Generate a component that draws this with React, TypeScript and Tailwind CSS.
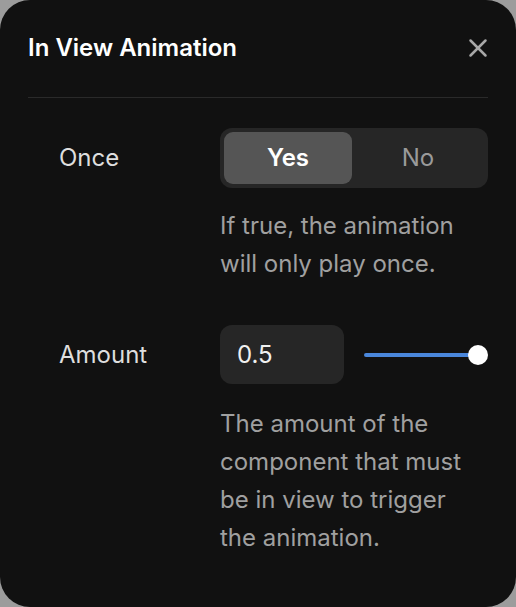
import { X } from "lucide-react"

export default function App() {
  return (
    <div className="w-[516px] h-[607px] bg-[#9c9c9c] font-['Inter',sans-serif]">
      <div className="h-full rounded-[30px] bg-[#111111] px-7 pt-[32px]">
        {/* Header */}
        <div className="flex items-center justify-between">
          <h2 className="text-[24px] leading-8 font-semibold text-white">In View Animation</h2>
          <X size={30} strokeWidth={2} className="text-[#a8a8a8] -mr-[5px] -my-1" />
        </div>
        <div className="mt-[33px] h-px bg-[#2a2a2a]" />

        <div className="pl-[31px] pt-[30px]">
          {/* Once */}
          <div className="grid grid-cols-[161px_1fr]">
            <div className="flex h-[60px] items-center text-[24px] text-[#dedede]">Once</div>
            <div>
              <div className="flex h-[60px] rounded-[12px] bg-[#262626] p-1">
                <button className="w-[128px] rounded-[9px] bg-[#555555] text-[24px] font-semibold text-white">
                  Yes
                </button>
                <button className="flex-1 text-[24px] text-[#9a9a9a]">No</button>
              </div>
              <p className="mt-[19px] text-[24px] leading-[38px] text-[#a0a0a0]">
                If true, the animation
                <br />
                will only play once.
              </p>
            </div>
          </div>

          {/* Amount */}
          <div className="mt-[42px] grid grid-cols-[161px_1fr]">
            <div className="flex h-[59px] items-center text-[24px] text-[#dedede]">Amount</div>
            <div>
              <div className="flex h-[59px] items-center gap-5">
                <div className="flex h-full w-[124px] items-center rounded-[12px] bg-[#262626] pl-[17px] text-[24px] text-[#f0f0f0]">
                  0.5
                </div>
                <div className="relative flex flex-1 items-center">
                  <div className="h-1 w-[114px] rounded-full bg-[#4a87dc]" />
                  <div className="absolute right-0 h-5 w-5 rounded-full bg-white" />
                </div>
              </div>
              <p className="mt-[21px] text-[24px] leading-[38px] text-[#a0a0a0]">
                The amount of the
                <br />
                component that must
                <br />
                be in view to trigger
                <br />
                the animation.
              </p>
            </div>
          </div>
        </div>
      </div>
    </div>
  )
}
